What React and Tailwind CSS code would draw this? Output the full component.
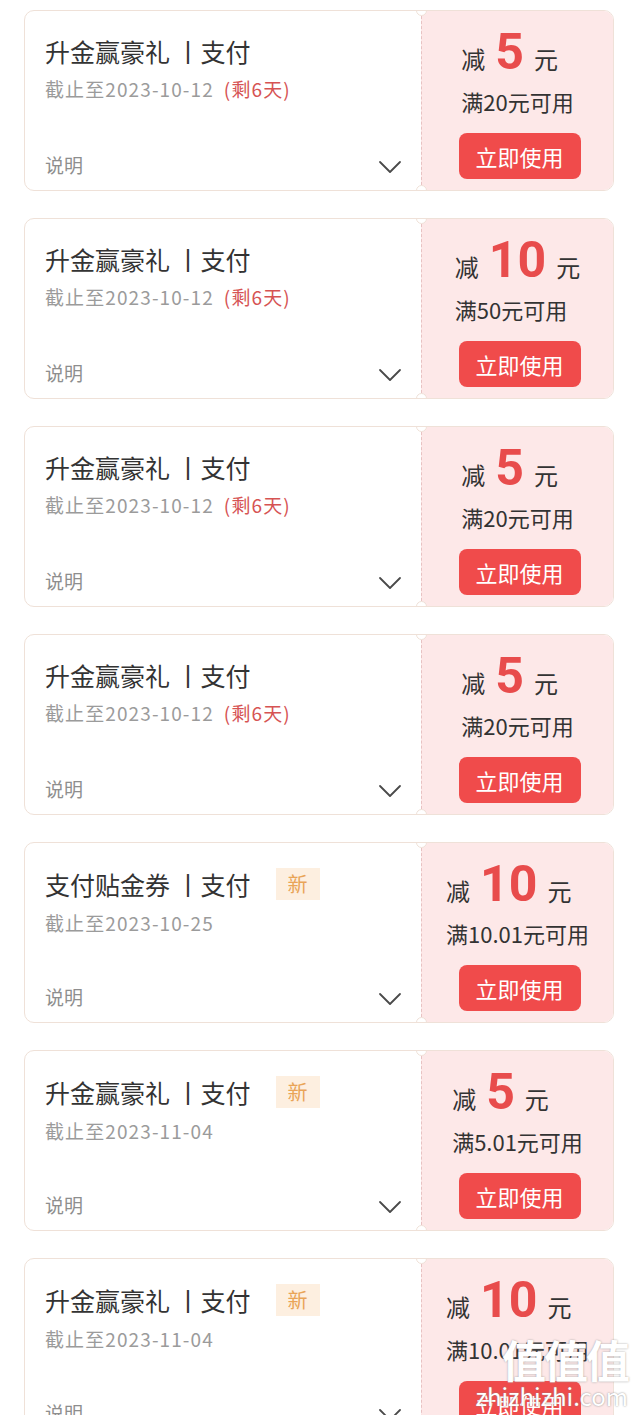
const coupons = [
  { title: "升金赢豪礼 丨支付", date: "截止至2023-10-12", left: "(剩6天)", amount: "5", rule: "满20元可用" },
  { title: "升金赢豪礼 丨支付", date: "截止至2023-10-12", left: "(剩6天)", amount: "10", rule: "满50元可用" },
  { title: "升金赢豪礼 丨支付", date: "截止至2023-10-12", left: "(剩6天)", amount: "5", rule: "满20元可用" },
  { title: "升金赢豪礼 丨支付", date: "截止至2023-10-12", left: "(剩6天)", amount: "5", rule: "满20元可用" },
  { title: "支付贴金券 丨支付", date: "截止至2023-10-25", isNew: true, amount: "10", rule: "满10.01元可用" },
  { title: "升金赢豪礼 丨支付", date: "截止至2023-11-04", isNew: true, amount: "5", rule: "满5.01元可用" },
  { title: "升金赢豪礼 丨支付", date: "截止至2023-11-04", isNew: true, amount: "10", rule: "满10.01元可用" },
];

function Chevron() {
  return (
    <svg width="24" height="14" viewBox="0 0 24 14" fill="none" className="mt-[4px]">
      <polyline points="2,2 12,12 22,2" stroke="#4a4a4a" strokeWidth="1.8" strokeLinecap="round" strokeLinejoin="round" />
    </svg>
  );
}

function CouponCard(props) {
  return (
    <div className="relative ml-[24px] flex h-[181px] w-[590px] shrink-0 overflow-hidden rounded-[10px] border border-[#efe1d8] bg-white">
      <div className="flex flex-1 flex-col pl-[20px] pr-[19px] pt-[25px] pb-[12px]">
        <div className="flex items-center">
          <span className="text-[25px] leading-[30px] text-[#333333]">{props.title}</span>
          {props.isNew && (
            <span className="ml-[25px] flex h-[32px] w-[44px] items-center justify-center bg-[#fdefe0] text-[20px] text-[#e9a457]">
              新
            </span>
          )}
        </div>
        <div className="mt-[10px] flex items-center text-[19px] leading-[26px] tracking-[1.1px]">
          <span className="text-[#9b9b9b]">{props.date}</span>
          {props.left && <span className="ml-[10px] text-[#d65353]">{props.left}</span>}
        </div>
        <div className="mt-auto flex items-center justify-between">
          <span className="text-[19px] leading-[26px] text-[#8e8e8e]">说明</span>
          <Chevron />
        </div>
      </div>
      <div className="relative flex w-[192px] flex-col items-center border-l border-dashed border-[#e8c2c2] bg-[#fde8e8]">
        <span className="absolute -left-[6px] -top-[6px] h-[11px] w-[11px] rounded-full border border-[#efe1d8] bg-white" />
        <span className="absolute -left-[6px] -bottom-[6px] h-[11px] w-[11px] rounded-full border border-[#efe1d8] bg-white" />
        <div className="flex flex-col items-start pt-[16px]">
          <div className="flex items-baseline leading-none">
            <span className="text-[24px] text-[#333333]">减</span>
            <span className="mx-[10px] font-['Roboto'] text-[50px] font-bold text-[#e84c4c]">{props.amount}</span>
            <span className="text-[24px] text-[#333333]">元</span>
          </div>
          <span className="mt-[10px] text-[22px] leading-[28px] text-[#333333]">{props.rule}</span>
        </div>
        <button className="mt-[18px] ml-[4px] flex h-[46px] w-[122px] items-center justify-center rounded-[8px] bg-[#f04b4b] text-[22px] text-white">
          立即使用
        </button>
      </div>
    </div>
  );
}

export default function App() {
  return (
    <div className="relative h-[1415px] w-[640px] overflow-hidden bg-white font-['Noto_Sans_CJK_SC','Noto_Sans',sans-serif]">
      <div className="flex flex-col gap-[27px] pt-[10px]">
        {coupons.map((c, i) => (
          <CouponCard key={i} {...c} />
        ))}
      </div>
      <div className="absolute right-[12px] bottom-[4px] flex flex-col items-end">
        <span className="text-[44px] leading-none font-bold tracking-[-2px] text-white [text-shadow:0_0_2px_#9a9a9a]">值值值</span>
        <span className="text-[24px] leading-[30px] text-white [text-shadow:0_0_2px_#8a8a8a]">zhizhizhi.com</span>
      </div>
    </div>
  );
}
